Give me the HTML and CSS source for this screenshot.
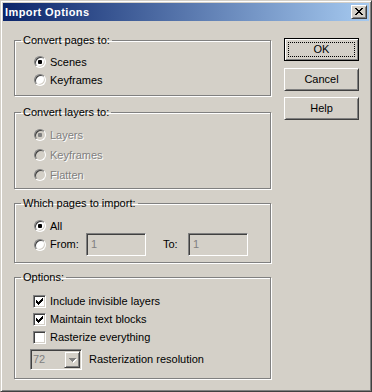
FILE: index.html
```html
<!DOCTYPE html>
<html lang="en">
<head>
  <meta charset="UTF-8">
  <title>Import Options</title>
  <link rel="stylesheet" href="styles.css">
</head>
<body>

  <div class="window">
    <div class="titlebar">
      <span class="title">Import Options</span>
      <span class="close">
        <svg width="8" height="7" viewBox="0 0 8 7"><path d="M0 0h2v1H0zM6 0h2v1H6zM1 1h2v1H1zM5 1h2v1H5zM2 2h4v1H2zM3 3h2v1H3zM2 4h4v1H2zM1 5h2v1H1zM5 5h2v1H5zM0 6h2v1H0zM6 6h2v1H6z"/></svg>
      </span>
    </div>

    <div class="dialog">
      <div class="groups">

        <fieldset class="group g-pages">
          <legend>Convert pages to:</legend>
          <div class="opts">
            <div class="row"><span class="radio on"></span><span>Scenes</span></div>
            <div class="row"><span class="radio"></span><span>Keyframes</span></div>
          </div>
        </fieldset>

        <fieldset class="group g-layers">
          <legend>Convert layers to:</legend>
          <div class="opts">
            <div class="row tall"><span class="radio dis on"></span><span class="dis-text">Layers</span></div>
            <div class="row tall"><span class="radio dis"></span><span class="dis-text">Keyframes</span></div>
            <div class="row tall"><span class="radio dis"></span><span class="dis-text">Flatten</span></div>
          </div>
        </fieldset>

        <fieldset class="group g-range">
          <legend>Which pages to import:</legend>
          <div class="opts">
            <div class="row"><span class="radio on"></span><span>All</span></div>
            <div class="row range-row">
              <span class="radio"></span>
              <span class="from-label">From:</span>
              <span class="edit">1</span>
              <span class="to-label">To:</span>
              <span class="edit">1</span>
            </div>
          </div>
        </fieldset>

        <fieldset class="group g-options">
          <legend>Options:</legend>
          <div class="opts">
            <div class="row">
              <span class="check"><svg width="7" height="7" viewBox="0 0 7 7"><path d="M0 2h1v3H0zM1 3h1v3H1zM2 4h1v3H2zM3 3h1v3H3zM4 2h1v3H4zM5 1h1v3H5zM6 0h1v3H6z"/></svg></span>
              <span>Include invisible layers</span>
            </div>
            <div class="row">
              <span class="check"><svg width="7" height="7" viewBox="0 0 7 7"><path d="M0 2h1v3H0zM1 3h1v3H1zM2 4h1v3H2zM3 3h1v3H3zM4 2h1v3H4zM5 1h1v3H5zM6 0h1v3H6z"/></svg></span>
              <span>Maintain text blocks</span>
            </div>
            <div class="row">
              <span class="check"></span>
              <span>Rasterize everything</span>
            </div>
            <div class="row combo-row">
              <span class="combo">
                <span class="combo-value">72</span>
                <span class="combo-btn">
                  <svg width="8" height="5" viewBox="0 0 8 5">
                    <path fill="#fff" d="M1 1h7v1H1zM2 2h5v1H2zM3 3h3v1H3zM4 4h1v1H4z"/>
                    <path fill="#808080" d="M0 0h7v1H0zM1 1h5v1H1zM2 2h3v1H2zM3 3h1v1H3z"/>
                  </svg>
                </span>
              </span>
              <span>Rasterization resolution</span>
            </div>
          </div>
        </fieldset>

      </div>

      <div class="buttons">
        <button class="btn default"><span class="focus">OK</span></button>
        <button class="btn">Cancel</button>
        <button class="btn">Help</button>
      </div>
    </div>
  </div>

</body>
</html>
```

FILE: styles.css
```css
/* Win2000 dialog colours */
:root {
  --face: #d4d0c8;
  --shadow: #808080;
  --dark: #404040;
  --light: #ffffff;
}
* {
  box-sizing: border-box;
}
body {
  margin: 0;
  background: var(--face);
  color: #000;
  font-family: "Liberation Sans", Arial, sans-serif;
  font-size: 11px;
  line-height: 13px;
}
.window {
  width: 372px;
  height: 392px;
  padding: 2px;
  border: 1px solid;
  border-color: var(--face) var(--dark) var(--dark) var(--face);
  box-shadow: inset 1px 1px 0 var(--light), inset -1px -1px 0 var(--shadow);
}
.titlebar {
  height: 18px;
  display: flex;
  align-items: center;
  justify-content: space-between;
  padding: 0 2px;
  background: linear-gradient(90deg, #0a246a, #a6caf0);
}
.title {
  color: #fff;
  font-weight: bold;
  letter-spacing: 0.4px;
}
.close {
  width: 16px;
  height: 14px;
  padding: 2px 0 0 3px;
  background: var(--face);
  border: 1px solid;
  border-color: var(--light) var(--dark) var(--dark) var(--light);
  box-shadow: inset 1px 1px 0 var(--face), inset -1px -1px 0 var(--shadow);
}
.close svg {
  display: block;
}

.dialog {
  display: flex;
  gap: 13px;
  padding: 13px 0 0 11px;
}
.groups {
  width: 257px;
  display: flex;
  flex-direction: column;
}
.group {
  margin: 0;
  padding: 0;
  min-width: 0;
  border: 1px solid var(--shadow);
  box-shadow: 1px 1px 0 var(--light), inset 1px 1px 0 var(--light);
}
.group legend {
  margin-left: 6px;
  padding: 0 2px;
}
.g-layers {
  margin-top: 10px;
}
.g-range,
.g-options {
  margin-top: 8px;
}
.opts {
  padding: 6px 0 6px 19px;
}
.g-layers .opts {
  padding-bottom: 3px;
}
.g-range .opts {
  padding-top: 7px;
}
.g-options .opts {
  padding-top: 8px;
  padding-bottom: 8px;
}
.row {
  display: flex;
  align-items: center;
  gap: 4px;
  height: 18px;
}
.row.tall {
  height: 20px;
}
.dis-text {
  color: var(--shadow);
  text-shadow: 1px 1px 0 var(--light);
}

/* radio buttons */
.radio {
  width: 12px;
  height: 12px;
  flex: none;
  display: flex;
  align-items: center;
  justify-content: center;
  border-radius: 50%;
  border: 1px solid;
  border-color: var(--shadow) var(--light) var(--light) var(--shadow);
  background: #fff;
  box-shadow: inset 1px 1px 0 var(--dark), inset -1px -1px 0 var(--face);
}
.radio.on::after {
  content: "";
  width: 4px;
  height: 4px;
  border-radius: 1px;
  background: #000;
}
.radio.dis {
  background: var(--face);
}
.radio.dis.on::after {
  background: var(--shadow);
}

/* check boxes */
.check {
  width: 13px;
  height: 13px;
  flex: none;
  margin-left: -1px;
  padding: 2px;
  background: #fff;
  border: 1px solid;
  border-color: var(--shadow) var(--light) var(--light) var(--shadow);
  box-shadow: inset 1px 1px 0 var(--dark), inset -1px -1px 0 var(--face);
}
.check svg {
  display: block;
}

/* page range */
.range-row {
  height: 23px;
  margin-top: -2px;
}
.from-label {
  width: 32px;
}
.to-label {
  width: 21px;
  margin-left: 13px;
}
.edit {
  width: 60px;
  height: 23px;
  display: flex;
  align-items: center;
  padding-left: 4px;
  color: var(--shadow);
  border: 1px solid;
  border-color: var(--shadow) var(--light) var(--light) var(--shadow);
  box-shadow: inset 1px 1px 0 var(--dark), inset -1px -1px 0 var(--face);
}

/* resolution combo */
.combo-row {
  height: 21px;
  margin-top: 3px;
  gap: 7px;
}
.combo {
  width: 52px;
  height: 21px;
  margin-left: -4px;
  display: flex;
  padding: 1px;
  border: 1px solid;
  border-color: var(--shadow) var(--light) var(--light) var(--shadow);
  box-shadow: inset 1px 1px 0 var(--dark), inset -1px -1px 0 var(--face);
}
.combo-value {
  flex: 1;
  padding: 2px 0 0 1px;
  color: var(--shadow);
}
.combo-btn {
  width: 16px;
  height: 17px;
  display: flex;
  align-items: center;
  justify-content: center;
  padding: 1px 0 0 1px;
  border: 1px solid;
  border-color: var(--face) var(--dark) var(--dark) var(--face);
  box-shadow: inset 1px 1px 0 var(--light), inset -1px -1px 0 var(--shadow);
}
.combo-btn svg {
  display: block;
}

/* push buttons */
.buttons {
  display: flex;
  flex-direction: column;
  gap: 6px;
  padding-top: 4px;
}
.btn {
  width: 75px;
  height: 23px;
  padding: 0;
  font: inherit;
  color: #000;
  background: var(--face);
  border: 1px solid;
  border-color: var(--light) var(--dark) var(--dark) var(--light);
  box-shadow: inset 1px 1px 0 var(--face), inset -1px -1px 0 var(--shadow);
}
.btn.default {
  margin-bottom: 1px;
  padding: 3px;
  border-color: #000;
  box-shadow: inset 1px 1px 0 var(--light), inset -1px -1px 0 var(--shadow);
}
.focus {
  display: flex;
  height: 100%;
  align-items: center;
  justify-content: center;
  border: 1px dotted #000;
}
```
